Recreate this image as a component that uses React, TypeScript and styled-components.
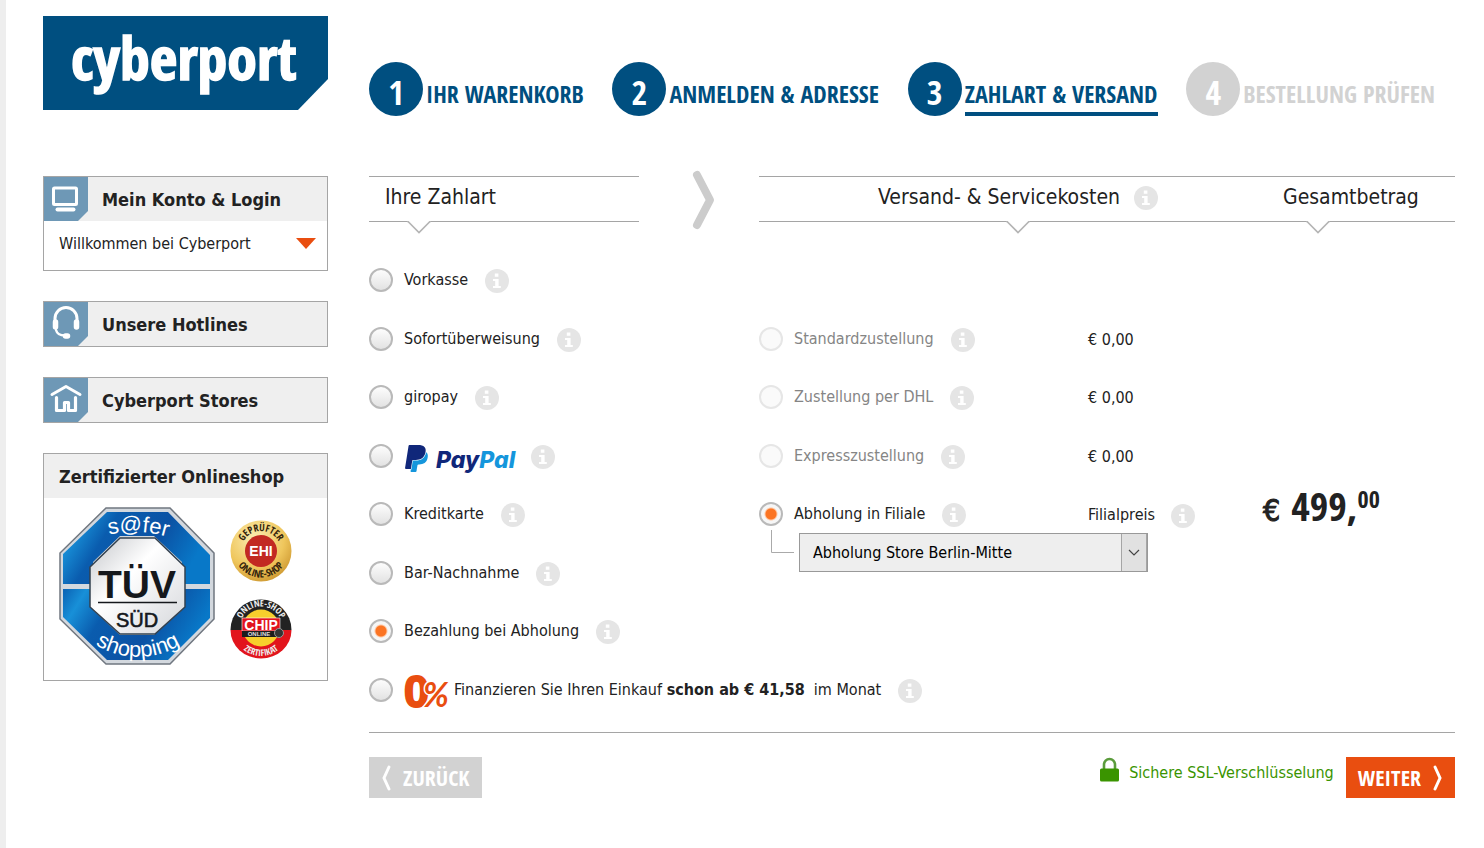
import React, { useState } from "react";
import styled, { createGlobalStyle, css } from "styled-components";

const sans = `"DejaVu Sans Condensed", "DejaVu Sans", "Noto Sans", sans-serif`;
const narrow = `"Open Sans Condensed", "Roboto Condensed", "Open Sans", sans-serif`;
const blue = "#004f80";
const orange = "#e94e10";
const line = "#a5a5a5";

const GlobalStyle = createGlobalStyle`
  *, *::before, *::after { box-sizing: border-box; }
  body { margin: 0; background: #fff; color: #222; font: 16px/20px ${sans}; }
  button, select, input { font: inherit; color: inherit; }
`;

const Page = styled.div`
  min-height: 100vh;
  border-left: 6px solid #eee;
  padding: 16px 29px 50px 37px;
`;

const Columns = styled.div`
  display: flex;
  align-items: flex-start;
  gap: 41px;
`;

const PageHeader = styled(Columns).attrs({ as: "header" })`
  margin-bottom: 60px;
`;

const LogoLink = styled.a`
  display: block;
  flex: 0 0 285px;
  svg { display: block; }
`;

/* ---------- progress steps ---------- */

const Steps = styled.ol`
  flex: 1;
  display: flex;
  justify-content: space-between;
  margin: 46px 0 0;
  padding: 0 20px 0 0;
  list-style: none;
`;

type StepState = "done" | "current" | "open";

const Step = styled.li<{ $state: StepState }>`
  display: flex;
  align-items: flex-end;
  gap: 3px;
  height: 54px;
  color: ${(p) => (p.$state === "open" ? "#d2d2d2" : blue)};
`;

const StepNumber = styled.span`
  display: flex;
  align-items: center;
  justify-content: center;
  width: 54px;
  height: 54px;
  padding-top: 6px;
  border-radius: 50%;
  background: currentColor;
  font: bold 34px/40px ${narrow};
  span { color: #fff; }
`;

const StepLabel = styled.a<{ $current: boolean }>`
  border-bottom: 4px solid ${(p) => (p.$current ? "currentColor" : "transparent")};
  color: inherit;
  font: bold 24px/36px ${narrow};
  text-decoration: none;
  white-space: nowrap;
`;

/* ---------- sidebar ---------- */

const Sidebar = styled.aside`
  flex: 0 0 285px;
  display: flex;
  flex-direction: column;
  gap: 30px;
`;

const Box = styled.section`
  border: 1px solid ${line};
`;

const BoxHead = styled.h2<{ $plain?: boolean }>`
  display: flex;
  align-items: center;
  gap: 14px;
  height: 44px;
  margin: 0;
  padding-left: ${(p) => (p.$plain ? 15 : 0)}px;
  padding-top: ${(p) => (p.$plain ? 2 : 0)}px;
  background: #efefef;
  font-size: 18px;
  line-height: 24px;
  svg { display: block; }
  a { padding-top: 2px; color: inherit; text-decoration: none; }
`;

const AccountBody = styled.div`
  display: flex;
  align-items: center;
  justify-content: space-between;
  height: 49px;
  padding: 0 11px 4px 15px;
`;

const IconButton = styled.button`
  display: block;
  padding: 0;
  border: 0;
  background: none;
  line-height: 0;
  cursor: pointer;
  svg { display: block; }
`;

const Seals = styled.div`
  display: flex;
  gap: 15px;
  padding: 9px 15px 15px;
`;

const SmallSeals = styled.div`
  display: flex;
  flex-direction: column;
  justify-content: center;
  gap: 15px;
  padding-top: 6px;
`;

/* ---------- checkout ---------- */

const Main = styled.main`
  flex: 1;
  min-width: 0;
`;

const Heads = styled.div`
  display: flex;
`;

const HeadBar = styled.div<{ $wide?: boolean }>`
  display: grid;
  flex: ${(p) => (p.$wide ? "1" : "0 0 270px")};
  grid-template-columns: ${(p) => (p.$wide ? "518px 1fr" : "1fr")};
  height: 46px;
  border: solid ${line};
  border-width: 1px 0;
`;

const Head = styled.h2<{ $notch: string; $centre?: boolean; $pad: number }>`
  position: relative;
  display: flex;
  align-items: center;
  justify-content: ${(p) => (p.$centre ? "center" : "flex-start")};
  gap: 14px;
  margin: 0;
  padding: 0 0 4px ${(p) => p.$pad}px;
  font-size: 21px;
  font-weight: 400;
  line-height: 24px;
  white-space: nowrap;
  > .notch {
    position: absolute;
    top: 100%;
    left: ${(p) => p.$notch};
    margin-left: -12px;
  }
`;

const HeadArrow = styled.div`
  flex: 0 0 120px;
  height: 46px;
  svg { display: block; margin: -8px 0 0 51px; }
`;

const Options = styled.form`
  display: grid;
  grid-template-columns: 270px 120px 329px 175px 1fr;
  grid-auto-rows: 1fr;
  min-height: 468px;
  margin-top: 29px;
`;

const Group = styled.div`
  display: contents;
`;

const Option = styled.div<{ $row: number; $column: string; $disabled?: boolean }>`
  display: flex;
  align-items: center;
  grid-row: ${(p) => p.$row};
  grid-column: ${(p) => p.$column};
  color: ${(p) => (p.$disabled ? "#858585" : "inherit")};
  white-space: nowrap;
`;

const OptionLabel = styled.label`
  display: flex;
  align-items: center;
  gap: 5px;
  margin: 0 17px 0 11px;
  svg { display: block; overflow: visible; }
`;

const Radio = styled.input.attrs({ type: "radio" })`
  appearance: none;
  flex: none;
  width: 24px;
  height: 24px;
  margin: 0;
  border: 2px solid #b9b9b9;
  border-radius: 50%;
  background: linear-gradient(#fdfdfd, #e2e2e2);
  ${(p) =>
    p.checked &&
    css`
      background: radial-gradient(circle, #fb7423 0 5px, #ffc9a6 6px, #f6f6f6 7px);
    `}
  &:disabled { border-color: #e6e6e6; background: #fafafa; }
`;

const InfoButton = styled(IconButton)`
  flex: none;
  padding-top: 2px;
`;

const Price = styled.div<{ $row: number }>`
  display: flex;
  align-items: center;
  gap: 16px;
  grid-row: ${(p) => p.$row};
  grid-column: 4;
  padding-top: 2px;
`;

const Total = styled.output`
  display: flex;
  align-items: baseline;
  align-self: center;
  grid-row: 5;
  grid-column: 5;
  padding-bottom: 16px;
  font: bold 40px/40px ${narrow};
  white-space: nowrap;
  .currency { margin-right: 11px; font: 30px/32px ${sans}; -webkit-text-stroke: 1px; }
  sup { align-self: flex-start; font-size: 24px; line-height: 26px; }
`;

const StorePicker = styled.div`
  display: flex;
  align-self: start;
  grid-row: 5 / span 2;
  grid-column: 3 / 5;
  margin: 45px 0 0 12px;
`;

const SelectWrap = styled.div`
  position: relative;
  width: 349px;
  margin: 3px 0 0 4px;
  svg { position: absolute; top: 1px; right: 1px; pointer-events: none; }
`;

const Select = styled.select`
  appearance: none;
  display: block;
  width: 100%;
  height: 39px;
  padding: 0 40px 0 13px;
  border: 1px solid #999;
  border-radius: 0;
  background: #eee;
  color: #000;
`;

const Footer = styled.footer`
  display: flex;
  align-items: flex-start;
  margin-top: 13px;
  padding-top: 24px;
  border-top: 1px solid ${line};
`;

const Action = styled.button<{ $primary?: boolean }>`
  display: flex;
  align-items: center;
  gap: 11px;
  height: 41px;
  padding: 0 12px;
  border: 0;
  background: ${(p) => (p.$primary ? orange : "#d2d2d2")};
  color: #fff;
  font: bold 22px/28px ${narrow};
  cursor: pointer;
  span { padding-bottom: 2px; }
`;

const Secure = styled.a`
  display: flex;
  align-items: center;
  gap: 9px;
  margin: 0 12px 0 auto;
  color: #3a9400;
  text-decoration: none;
  svg { margin-bottom: 6px; }
`;

/* ---------- drawings ---------- */

const Logo = () => (
  <svg width="285" height="94" viewBox="0 0 285 94" role="img" aria-label="cyberport">
    <path d="M0 0h285v63l-30 31H0z" fill={blue} />
    <text x="28" y="64" fontFamily="Open Sans Condensed, Roboto Condensed, sans-serif" fontWeight="700" fontSize="60" fill="#fff" stroke="#fff" strokeWidth="1.5">cyberport</text>
  </svg>
);

const InfoIcon = () => (
  <svg width="24" height="24" viewBox="0 0 24 24" aria-hidden="true">
    <circle cx="12" cy="12" r="12" fill="#e5e5e5" />
    <path d="M9.8 4.6h3.6v3.2H9.8zM8 10h5.6v7h2.2v2H8v-2h2.2v-5H8z" fill="#fff" />
  </svg>
);

const Info = ({ about }: { about: string }) => (
  <InfoButton type="button" aria-label={`Info: ${about}`}>
    <InfoIcon />
  </InfoButton>
);

const Notch = () => (
  <svg className="notch" width="24" height="13" viewBox="0 0 24 13" aria-hidden="true">
    <path d="M0 0h24v1H0z" fill="#fff" />
    <path d="M0 .5h1l11 11 11-11h1" fill="#fff" stroke="#b4b4b4" strokeWidth="1.6" />
  </svg>
);

const Tile = ({ children }: { children: React.ReactNode }) => (
  <svg width="44" height="44" viewBox="0 0 44 44" fill="none" stroke="#fff" strokeLinecap="round" strokeLinejoin="round" aria-hidden="true">
    <path d="M0 0h44v34L34 44H0z" fill="#6e98b6" stroke="none" />
    {children}
  </svg>
);

const ScreenTile = () => (
  <Tile>
    <rect x="9.500" y="11" width="23" height="16.500" rx="1" strokeWidth="3" />
    <path d="M13.500 32.500h16" strokeWidth="4" />
  </Tile>
);

const HeadsetTile = () => (
  <Tile>
    <path d="M11 19v-2.500a11 11 0 0 1 22 0V19" strokeWidth="3" />
    <path d="M11.500 20v5M32.500 20v5" strokeWidth="5.500" />
    <path d="M12 28c1 4 4 5.500 9 5.500" strokeWidth="2.400" />
    <path d="M21.500 34h2" strokeWidth="5.500" />
  </Tile>
);

const HouseTile = () => (
  <Tile>
    <path d="M8 16.500 22 8.500l14 8" strokeWidth="3" />
    <path d="M12.500 19.500v13h8v-8h4v8h7v-13" strokeWidth="3.200" />
  </Tile>
);

const TuvSeal = () => (
  <svg width="156" height="158" viewBox="0 0 156 158" role="img" aria-label="TÜV SÜD s@fer shopping">
    <defs>
      <linearGradient id="tuvBlue" x1="0" y1="0" x2="1" y2="0.300">
        <stop offset="0" stopColor="#0a62b4" />
        <stop offset="0.150" stopColor="#1890d8" />
        <stop offset="0.350" stopColor="#0a5cae" />
        <stop offset="0.700" stopColor="#0b52a4" />
        <stop offset="1" stopColor="#0878c8" />
      </linearGradient>
      <linearGradient id="tuvCore" x1="0" y1="0" x2="1" y2="1">
        <stop offset="0" stopColor="#c4c6ca" />
        <stop offset="0.400" stopColor="#fff" />
        <stop offset="1" stopColor="#d4d6da" />
      </linearGradient>
      <path id="tuvTop" d="M38 31Q79 17 120 34" />
      <path id="tuvBottom" d="M24 128a80 80 0 0 0 110 0" />
    </defs>
    <path d="M47 1h64l44 45v66l-44 45H47L1 112V46z" fill="#d3d8de" stroke="#707780" strokeWidth="1.500" />
    <path d="M48 5h61l42 43v29h-28V55l-28-26H61L34 55v22H4V47z" fill="url(#tuvBlue)" />
    <path d="M4 82h30v21l27 25h34l28-25V82h28v29l-42 42H48L4 110z" fill="url(#tuvBlue)" />
    <path d="M61 31h35l30 29v40l-30 27H61L31 100V60z" fill="url(#tuvCore)" stroke="#33414f" strokeWidth="1.500" />
    <text x="78" y="91" textAnchor="middle" fontFamily="Liberation Sans, sans-serif" fontWeight="700" fontSize="39" fill="#15181c">TÜV</text>
    <path d="M39 95.500h79" stroke="#15181c" strokeWidth="1.500" />
    <text x="78" y="120" textAnchor="middle" fontFamily="Liberation Sans, sans-serif" fontSize="20" fill="#15181c" stroke="#15181c" strokeWidth="0.600">SÜD</text>
    <g fontFamily="Liberation Sans, sans-serif" fill="#fff">
      <text fontSize="22" textAnchor="middle"><textPath href="#tuvTop" startOffset="50%">s@fer</textPath></text>
      <text fontSize="22" textAnchor="middle"><textPath href="#tuvBottom" startOffset="50%">shopping</textPath></text>
    </g>
  </svg>
);

const EhiSeal = () => (
  <svg width="62" height="62" viewBox="0 0 62 62" role="img" aria-label="EHI Geprüfter Online-Shop">
    <defs>
      <radialGradient id="ehiGold" cx="0.400" cy="0.300" r="0.800">
        <stop offset="0" stopColor="#fbeeb4" />
        <stop offset="0.600" stopColor="#efc65c" />
        <stop offset="1" stopColor="#c78f28" />
      </radialGradient>
      <path id="ehiTop" d="M11 31a20 20 0 0 1 40 0" />
      <path id="ehiBottom" d="M3.500 30a27.500 27.500 0 0 0 55 0" />
    </defs>
    <circle cx="31" cy="31" r="30.500" fill="url(#ehiGold)" />
    <circle cx="31" cy="31" r="16" fill="#c22a22" />
    <text x="31" y="36" textAnchor="middle" fontFamily="Liberation Sans, sans-serif" fontWeight="700" fontSize="14" fill="#fff">EHI</text>
    <g fontFamily="Open Sans Condensed, sans-serif" fontWeight="700" fontSize="10" fill="#33240c" textAnchor="middle">
      <text><textPath href="#ehiTop" startOffset="50%">GEPRÜFTER</textPath></text>
      <text><textPath href="#ehiBottom" startOffset="50%">ONLINE-SHOP</textPath></text>
    </g>
  </svg>
);

const ChipSeal = () => (
  <svg width="62" height="62" viewBox="0 0 62 62" role="img" aria-label="CHIP Online Zertifikat">
    <defs>
      <path id="chipTop" d="M9.500 31a21.500 21.500 0 0 1 43 0" />
      <path id="chipBottom" d="M3 31a28 28 0 0 0 56 0" />
    </defs>
    <path d="M.5 33a30.500 30.500 0 1 1 61 0z" fill="#222" />
    <path d="M.5 33a30.500 28.500 0 0 0 61 0z" fill="#e2141c" />
    <circle cx="31" cy="31" r="18.500" fill="#f7cf2c" />
    <path d="M12 21h38v13H12z" fill="#e2141c" stroke="#fff" strokeWidth="0.600" />
    <path d="M12 34h40v6H12z" fill="#1c1c1c" />
    <text x="31" y="33" textAnchor="middle" fontFamily="Liberation Sans, sans-serif" fontWeight="700" fontSize="14" fill="#fff">CHIP</text>
    <text x="29" y="39" textAnchor="middle" fontFamily="Liberation Sans, sans-serif" fontWeight="700" fontSize="6" fill="#ddd">ONLINE</text>
    <circle cx="49" cy="36" r="4.500" fill="#333" stroke="#999" />
    <g fontFamily="Open Sans Condensed, sans-serif" fontWeight="700" fontSize="9" fill="#eee" textAnchor="middle">
      <text><textPath href="#chipTop" startOffset="50%">ONLINE-SHOP</textPath></text>
      <text><textPath href="#chipBottom" startOffset="50%">ZERTIFIKAT</textPath></text>
    </g>
  </svg>
);

const PayPalLogo = () => (
  <svg width="110" height="30" viewBox="0 0 110 30" role="img" aria-label="PayPal">
    <g transform="translate(-1 4) scale(1.120)">
      <path fill="#1596dc" d="M21.222 6.917a3.350 3.350 0 0 0-.607-.541c-.013.076-.026.175-.041.254-.93 4.778-4.005 7.201-9.138 7.201h-2.190a.563.563 0 0 0-.556.479l-1.187 7.527h-.506l-.24 1.516a.56.56 0 0 0 .554.647h3.882c.46 0 .85-.334.922-.788.06-.26.76-4.852.816-5.090a.932.932 0 0 1 .923-.788h.58c3.760 0 6.705-1.528 7.565-5.946.36-1.847.174-3.388-.777-4.471z" />
      <path fill="#10277a" d="M7.076 21.337H2.470a.641.641 0 0 1-.633-.74L4.944.901C5.026.382 5.474 0 5.998 0h7.460c2.570 0 4.578.543 5.690 1.810 1.010 1.150 1.304 2.420 1.012 4.287-.023.143-.047.288-.077.437-.983 5.050-4.349 6.797-8.647 6.797h-2.190c-.524 0-.968.382-1.050.9l-1.120 7.106z" />
    </g>
    <text x="32" y="27" fontFamily="Inter, sans-serif" fontWeight="800" fontStyle="italic" fontSize="23" fill="#10277a">Pay<tspan fill="#1596dc">Pal</tspan></text>
  </svg>
);

const ZeroPercent = () => (
  <svg width="45" height="38" viewBox="0 0 45 38" role="img" aria-label="0 %">
    <g fill={orange} fontWeight="700">
      <text x="0" y="36" fontFamily="Liberation Sans, sans-serif" fontSize="45" stroke={orange} strokeWidth="2">0</text>
      <text x="19" y="36" fontFamily="Lato, sans-serif" fontStyle="italic" fontSize="34" stroke="#fff" strokeWidth="3" paintOrder="stroke">%</text>
    </g>
  </svg>
);

const LockIcon = () => (
  <svg width="21" height="26" viewBox="0 0 21 26" aria-hidden="true">
    <path d="M5 13V7.500a5.500 5.500 0 0 1 11 0V13" fill="none" stroke="#5b9c3c" strokeWidth="2.600" />
    <rect x="1" y="11.500" width="19" height="13" rx="1.500" fill="#3a9400" />
  </svg>
);

const ActionArrow = ({ back }: { back?: boolean }) => (
  <svg width="11" height="26" viewBox="0 0 11 26" fill="none" stroke="#fff" strokeWidth="3" strokeLinecap="round" aria-hidden="true">
    <path d={back ? "M8 2 3 13l5 11" : "M3 2l5 11-5 11"} />
  </svg>
);

/* ---------- content ---------- */

const steps: { label: string; state: StepState }[] = [
  { label: "IHR WARENKORB", state: "done" },
  { label: "ANMELDEN & ADRESSE", state: "done" },
  { label: "ZAHLART & VERSAND", state: "current" },
  { label: "BESTELLUNG PRÜFEN", state: "open" },
];

const payments: { id: string; name: string; content?: React.ReactNode }[] = [
  { id: "vorkasse", name: "Vorkasse" },
  { id: "sofort", name: "Sofortüberweisung" },
  { id: "giropay", name: "giropay" },
  { id: "paypal", name: "PayPal", content: <PayPalLogo /> },
  { id: "kreditkarte", name: "Kreditkarte" },
  { id: "nachnahme", name: "Bar-Nachnahme" },
  { id: "abholung", name: "Bezahlung bei Abholung" },
  {
    id: "finanzierung",
    name: "Finanzierung",
    content: (
      <>
        <ZeroPercent />
        <span>
          Finanzieren Sie Ihren Einkauf <b>schon ab € 41,58</b>&nbsp; im Monat
        </span>
      </>
    ),
  },
];

const shippings = [
  { id: "standard", name: "Standardzustellung", price: "€ 0,00", disabled: true },
  { id: "dhl", name: "Zustellung per DHL", price: "€ 0,00", disabled: true },
  { id: "express", name: "Expresszustellung", price: "€ 0,00", disabled: true },
  { id: "filiale", name: "Abholung in Filiale", price: "Filialpreis", disabled: false },
];

export default function App() {
  const [payment, setPayment] = useState("abholung");
  const [shipping, setShipping] = useState("filiale");

  return (
    <>
      <GlobalStyle />
      <Page>
        <PageHeader>
          <LogoLink href="#"><Logo /></LogoLink>
          <Steps>
            {steps.map((s, i) => (
              <Step key={s.label} $state={s.state}>
                <StepNumber><span>{i + 1}</span></StepNumber>
                <StepLabel href="#" $current={s.state === "current"}>{s.label}</StepLabel>
              </Step>
            ))}
          </Steps>
        </PageHeader>

        <Columns>
          <Sidebar>
            <Box>
              <BoxHead><ScreenTile /><a href="#">Mein Konto &amp; Login</a></BoxHead>
              <AccountBody>
                Willkommen bei Cyberport
                <IconButton type="button" aria-label="Konto öffnen">
                  <svg width="20" height="11" viewBox="0 0 20 11"><path d="M0 0h20L10 11z" fill={orange} /></svg>
                </IconButton>
              </AccountBody>
            </Box>
            <Box><BoxHead><HeadsetTile /><a href="#">Unsere Hotlines</a></BoxHead></Box>
            <Box><BoxHead><HouseTile /><a href="#">Cyberport Stores</a></BoxHead></Box>
            <Box>
              <BoxHead $plain>Zertifizierter Onlineshop</BoxHead>
              <Seals>
                <TuvSeal />
                <SmallSeals><EhiSeal /><ChipSeal /></SmallSeals>
              </Seals>
            </Box>
          </Sidebar>

          <Main>
            <Heads>
              <HeadBar>
                <Head id="pay-head" $pad={16} $notch="50px">Ihre Zahlart<Notch /></Head>
              </HeadBar>
              <HeadArrow>
                <svg width="28" height="64" viewBox="0 0 28 64" fill="none" stroke="#ccc" strokeWidth="8" strokeLinecap="round" strokeLinejoin="round" aria-hidden="true">
                  <path d="M7 7l13 25L7 57" />
                </svg>
              </HeadArrow>
              <HeadBar $wide>
                <Head id="ship-head" $centre $pad={0} $notch="50%">
                  Versand- &amp; Servicekosten<Info about="Versand- & Servicekosten" /><Notch />
                </Head>
                <Head $pad={6} $notch="41px">Gesamtbetrag<Notch /></Head>
              </HeadBar>
            </Heads>

            <Options id="checkout" onSubmit={(e) => e.preventDefault()}>
              <Group role="radiogroup" aria-labelledby="pay-head">
                {payments.map((p, i) => (
                  <Option key={p.id} $row={i + 1} $column={p.id === "finanzierung" ? "1 / -1" : "1"}>
                    <Radio id={p.id} name="payment" checked={payment === p.id} onChange={() => setPayment(p.id)} />
                    <OptionLabel htmlFor={p.id}>{p.content ?? p.name}</OptionLabel>
                    <Info about={p.name} />
                  </Option>
                ))}
              </Group>
              <Group role="radiogroup" aria-labelledby="ship-head">
                {shippings.map((s, i) => (
                  <React.Fragment key={s.id}>
                    <Option $row={i + 2} $column="3" $disabled={s.disabled}>
                      <Radio id={s.id} name="shipping" disabled={s.disabled} checked={shipping === s.id} onChange={() => setShipping(s.id)} />
                      <OptionLabel htmlFor={s.id}>{s.name}</OptionLabel>
                      <Info about={s.name} />
                    </Option>
                    <Price $row={i + 2}>
                      {s.price}
                      {!s.disabled && <Info about={s.price} />}
                    </Price>
                  </React.Fragment>
                ))}
              </Group>
              <StorePicker>
                <svg width="24" height="24" viewBox="0 0 24 24" fill="none" stroke="#aaa" aria-hidden="true">
                  <path d="M.5 0v22.500H23" />
                </svg>
                <SelectWrap>
                  <Select aria-label="Abholstore" defaultValue="mitte">
                    <option value="mitte">Abholung Store Berlin-Mitte</option>
                  </Select>
                  <svg width="26" height="37" viewBox="0 0 26 37" fill="none" aria-hidden="true">
                    <path d="M0 0h26v37H0z" fill="#e1e1e1" />
                    <path d="M.5 0v37M25.500 0v37" stroke="#a5a5a5" />
                    <path d="M8 16l5 5 5-5" stroke="#444" strokeWidth="1.200" />
                  </svg>
                </SelectWrap>
              </StorePicker>
              <Total>
                <span className="currency">€</span>499,<sup>00</sup>
              </Total>
            </Options>

            <Footer>
              <Action type="button"><ActionArrow back /><span>ZURÜCK</span></Action>
              <Secure href="#"><LockIcon />Sichere SSL-Verschlüsselung</Secure>
              <Action type="submit" form="checkout" $primary><span>WEITER</span><ActionArrow /></Action>
            </Footer>
          </Main>
        </Columns>
      </Page>
    </>
  );
}
